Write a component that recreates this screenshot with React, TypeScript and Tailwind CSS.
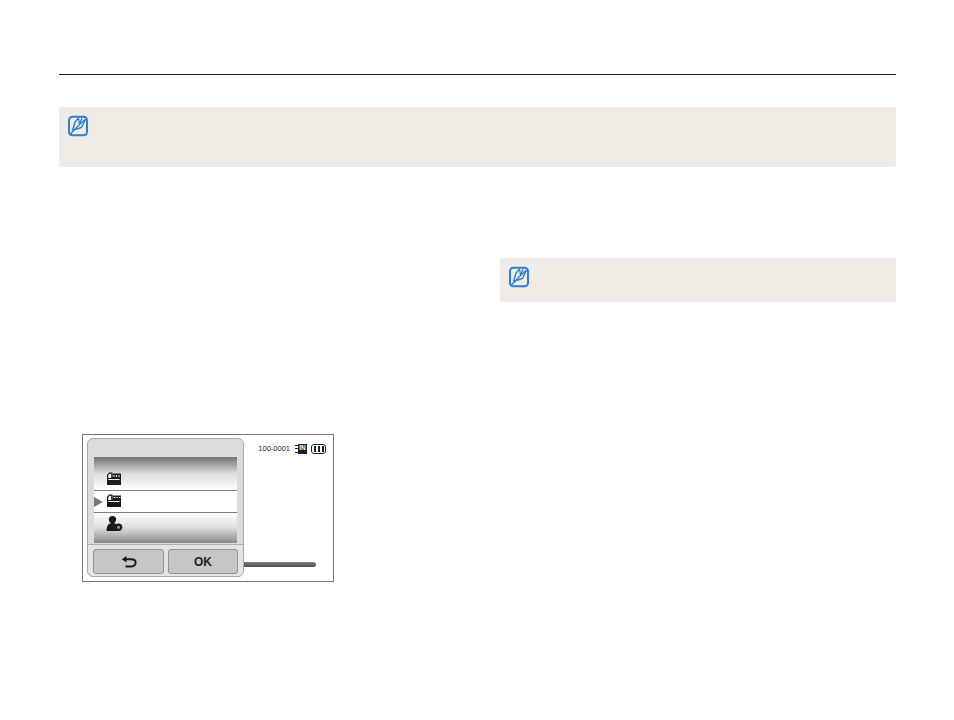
const NoteIcon = () => (
  <svg width="22" height="22" viewBox="0 0 22 22" fill="none" stroke="#2f7fd0" className="shrink-0">
    <rect x="2" y="1.8" width="18" height="18.4" rx="3.5" strokeWidth="2" />
    <path d="M5.5 15.5 L8 7 L11.5 3 M5.5 15.5 L14.5 12.5 L18.5 4" strokeWidth="1.4" />
    <path d="M2.5 20 L12.5 9.5 L11.5 3 M12.5 9.5 L15 3 M12.5 9.5 L18 4.5" strokeWidth="1.3" />
  </svg>
);

const FolderIcon = ({ marks }: { marks: string }) => (
  <svg width="16" height="14" viewBox="0 0 16 14" className="block">
    <path d="M1 13 V3 L3 0.5 H6.5 V5 H15 V13 Z" fill="#1a1a1a" />
    <path d="M2.2 6 V3.4 L3.5 1.7 H5.2 V6 Z" fill="#f2f2f2" />
    <rect x="6.5" y="1.5" width="8.5" height="4.5" fill="#1a1a1a" />
    <path d={marks} stroke="#e8e8e8" strokeWidth="1.1" />
    <rect x="2.2" y="7" width="11.4" height="1" fill="#f2f2f2" />
  </svg>
);

const PersonIcon = () => (
  <svg width="17" height="15" viewBox="0 0 17 15" className="block">
    <circle cx="6.5" cy="3.6" r="3.6" fill="#1a1a1a" />
    <path d="M0.5 15 C0.5 9.5 2.5 7 6.5 7 C10.5 7 12 9.5 12 15 Z" fill="#1a1a1a" />
    <circle cx="12.5" cy="11.2" r="3.8" fill="#1a1a1a" />
    <circle cx="12.5" cy="11.2" r="1.5" fill="#9a9a9a" />
  </svg>
);

const App = () => {
  return (
    <div className="w-[954px] h-[720px] bg-white pl-[59px] pr-[58px] pt-[74px] font-['Liberation_Sans',sans-serif]">
      <div className="h-px bg-[#1a1a1a]" />

      {/* top note */}
      <div className="mt-[32px] h-[60px] rounded-[3px] bg-[#f0ebe5] pl-[8px] pt-[8px]">
        <NoteIcon />
      </div>

      <div className="flex">
        {/* left column */}
        <div className="w-[441px] pl-[23px] pt-[267px]">
          <div className="relative w-[252px] h-[148px] border border-[#777777] bg-white">
            <div className="flex items-center justify-end pt-[7px] pr-[7px] h-[20px]">
              <span className="text-[7.5px] leading-[10px] text-[#222222] mr-[5px]">100-0001</span>
              <span className="flex items-center h-[10px] mr-[4px]">
                <span className="flex flex-col justify-between w-[3px] h-full py-px">
                  <span className="h-px bg-[#222222]" />
                  <span className="h-px bg-[#222222]" />
                  <span className="h-px bg-[#222222]" />
                </span>
                <span className="flex items-center justify-center w-[9px] h-full bg-[#222222] text-[6.5px] leading-none font-bold text-white">IN</span>
              </span>
              <span className="flex items-center gap-[2px] w-[15px] h-[10px] border-[1.5px] border-[#222222] rounded-[3px] px-[1.5px] py-px">
                <span className="flex-1 h-full bg-[#222222]" />
                <span className="flex-1 h-full bg-[#222222]" />
                <span className="flex-1 h-full bg-[#222222]" />
              </span>
            </div>

            {/* slider behind the dialog */}
            <div className="absolute left-[150px] top-[127px] w-[83px] h-[5px] rounded-full bg-gradient-to-b from-[#808080] to-[#4f4f4f]" />

            {/* dialog */}
            <div className="absolute left-[4px] top-[3px] w-[157px] h-[139px] flex flex-col rounded-[6px] border border-[#a8a8a8] bg-[#dcdcdc] px-[6px]">
              <div className="h-[18px] shrink-0" />
              <div className="relative w-[143px] shrink-0">
                <div className="h-[33px] bg-gradient-to-b from-[#737373] via-[#dddddd] to-white pl-[12px] pt-[15px]">
                  <FolderIcon marks="M8 3 V5 M10.5 3 V5 M13 3 V5" />
                </div>
                <div className="h-[23px] bg-white border-y border-[#808080] pl-[12px] pt-[3px]">
                  <FolderIcon marks="M7.5 3.5 H9.5 M10.5 3.5 H12 M13 3.5 H14.5" />
                </div>
                <div className="h-[30px] bg-gradient-to-b from-white via-[#dddddd] to-[#8a8a8a] pl-[12px] pt-[3px]">
                  <PersonIcon />
                </div>
                <div className="absolute left-0 top-[40px] w-0 h-0 border-y-[5px] border-y-transparent border-l-[9px] border-l-[#777777]" />
              </div>
              <div className="mt-[1px] -mx-[6px] flex-1 border-t border-[#b0b0b0] bg-[#e4e4e4] rounded-b-[6px] flex gap-[4px] px-[5px] pt-[4px]">
                <button className="flex items-center justify-center w-[72px] h-[25px] rounded-[3px] border border-[#949494] bg-[#c6c6c6]">
                  <svg width="16" height="12" viewBox="0 0 16 12" fill="none" stroke="#1a1a1a" strokeWidth="2">
                    <path d="M4 3.2 H10.5 C13.2 3.2 14.6 4.8 14.6 6.6 C14.6 8.5 13.2 10.4 10.5 10.4 H4.5" />
                    <path d="M5.5 0 L0.8 3.2 L5.5 6.4 Z" fill="#1a1a1a" stroke="none" />
                  </svg>
                </button>
                <button className="flex items-center justify-center w-[71px] h-[25px] rounded-[3px] border border-[#949494] bg-[#c6c6c6] text-[12px] font-bold text-[#222222]">
                  OK
                </button>
              </div>
            </div>
          </div>
        </div>

        {/* right column */}
        <div className="flex-1 pt-[91px]">
          <div className="h-[44px] rounded-[3px] bg-[#f0ebe5] pl-[8px] pt-[8px]">
            <NoteIcon />
          </div>
        </div>
      </div>
    </div>
  );
};

export default App;
